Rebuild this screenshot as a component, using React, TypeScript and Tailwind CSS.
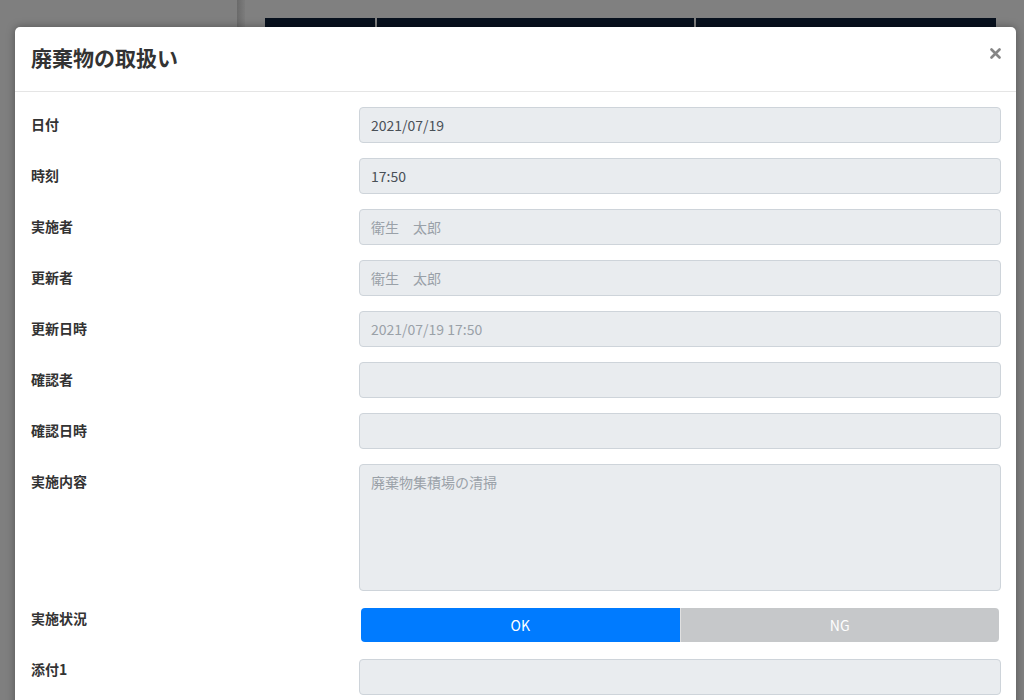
import React from "react";

const font = { fontFamily: '"Noto Sans CJK JP", "Noto Sans", sans-serif' };

type Row = {
  label: string;
  value?: string;
  muted?: boolean;
  textarea?: boolean;
};

const rows: Row[] = [
  { label: "日付", value: "2021/07/19" },
  { label: "時刻", value: "17:50" },
  { label: "実施者", value: "衛生　太郎", muted: true },
  { label: "更新者", value: "衛生　太郎", muted: true },
  { label: "更新日時", value: "2021/07/19 17:50", muted: true },
  { label: "確認者" },
  { label: "確認日時" },
  { label: "実施内容", value: "廃棄物集積場の清掃", muted: true, textarea: true },
];

function Field({ row }: { row: Row }) {
  const base =
    "w-full rounded-[4px] border border-[#ced4da] bg-[#e9ecef] pl-[11px] pr-3 text-[14px] leading-[20px]";
  const color = row.muted ? "text-[#9aa1a8]" : "text-[#495057]";
  if (row.textarea) {
    return (
      <div className={`${base} ${color} h-[127px] pt-[7px]`}>{row.value}</div>
    );
  }
  return (
    <div className={`${base} ${color} flex h-[36px] items-center`}>{row.value}</div>
  );
}

export default function App() {
  return (
    <div className="relative h-[700px] w-[1024px] overflow-hidden bg-[#808080]" style={font}>
      {/* Page behind the backdrop */}
      <div className="flex h-full">
        <div className="w-[237px] bg-[#7f7f7f]" />
        <div className="w-[8px] bg-gradient-to-r from-[#6a6a6a] to-[#7c7c7c]" />
        <div className="flex-1 px-[20px] pt-[18px]">
          <div className="flex h-[9px] w-[731px] gap-[2px]">
            <div className="w-[110px] bg-[#08111e]" />
            <div className="w-[317px] bg-[#08111e]" />
            <div className="flex-1 bg-[#08111e]" />
          </div>
        </div>
      </div>

      {/* Modal */}
      <div className="absolute left-[15px] top-[27px] w-[1001px] rounded-t-[5px] bg-white shadow-[0_0_8px_rgba(0,0,0,0.35)]">
        <div className="flex h-[65px] items-center justify-between border-b border-[#e5e5e5] pl-[16px] pr-[15px]">
          <h1 className="mb-[4px] text-[21px] font-bold leading-[24px] text-[#333]">廃棄物の取扱い</h1>
          <svg width="11" height="11" viewBox="0 0 11 11" className="mb-[11px]">
            <path d="M1.5 1.5 L9.5 9.5 M9.5 1.5 L1.5 9.5" stroke="#858585" strokeWidth="2.6" strokeLinecap="round" />
          </svg>
        </div>
        <div className="flex flex-col gap-[15px] pb-4 pl-[16px] pr-[15px] pt-[15px]">
          {rows.map((row) => (
            <div key={row.label} className="flex">
              <div className="w-[328px] shrink-0 pt-[7px] text-[14px] font-bold leading-[20px] text-[#333]">
                {row.label}
              </div>
              <div className="flex-1">
                <Field row={row} />
              </div>
            </div>
          ))}
          <div className="flex pt-[2px]">
            <div className="w-[328px] shrink-0 text-[14px] font-bold leading-[20px] text-[#333]">
              実施状況
            </div>
            <div className="flex h-[34px] flex-1 px-[2px]">
              <div className="flex flex-1 items-center justify-center rounded-l-[4px] bg-[#007bff] text-[14px] text-white">
                OK
              </div>
              <div className="flex flex-1 items-center justify-center rounded-r-[4px] border-l border-[#e0e0e0] bg-[#c6c8ca] text-[14px] text-white">
                NG
              </div>
            </div>
          </div>
          <div className="flex pt-[2px]">
            <div className="w-[328px] shrink-0 text-[14px] font-bold leading-[20px] text-[#333]">
              添付1
            </div>
            <div className="flex-1">
              <Field row={{ label: "添付1" }} />
            </div>
          </div>
        </div>
      </div>
    </div>
  );
}
